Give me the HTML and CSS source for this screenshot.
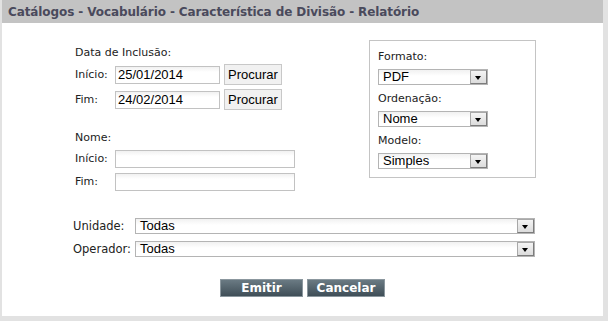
FILE: index.html
```html
<!DOCTYPE html>
<html lang="pt">
<head>
    <meta charset="UTF-8">
    <title>Característica de Divisão - Relatório</title>
    <link rel="stylesheet" href="styles.css">
</head>
<body>
    <div class="panel">
        <div class="panel-title">Catálogos - Vocabulário - Característica de Divisão - Relatório</div>
        <div class="panel-body">
            <div class="top">
                <div class="left">
                    <div class="group">
                        <div class="group-title">Data de Inclusão:</div>
                        <div class="row">
                            <label>Início:</label>
                            <input class="field date" type="text" value="25/01/2014">
                            <button class="btn-search">Procurar</button>
                        </div>
                        <div class="row">
                            <label>Fim:</label>
                            <input class="field date" type="text" value="24/02/2014">
                            <button class="btn-search">Procurar</button>
                        </div>
                    </div>
                    <div class="group names">
                        <div class="group-title">Nome:</div>
                        <div class="row">
                            <label>Início:</label>
                            <input class="field name" type="text">
                        </div>
                        <div class="row">
                            <label>Fim:</label>
                            <input class="field name" type="text">
                        </div>
                    </div>
                </div>

                <div class="options">
                    <div class="opt-label">Formato:</div>
                    <div class="combo small"><span class="combo-text">PDF</span><span class="combo-arrow"></span></div>
                    <div class="opt-label">Ordenação:</div>
                    <div class="combo small"><span class="combo-text">Nome</span><span class="combo-arrow"></span></div>
                    <div class="opt-label">Modelo:</div>
                    <div class="combo small"><span class="combo-text">Simples</span><span class="combo-arrow"></span></div>
                </div>
            </div>

            <div class="filters">
                <div class="filter-row">
                    <label>Unidade:</label>
                    <div class="combo wide"><span class="combo-text">Todas</span><span class="combo-arrow"></span></div>
                </div>
                <div class="filter-row">
                    <label>Operador:</label>
                    <div class="combo wide"><span class="combo-text">Todas</span><span class="combo-arrow"></span></div>
                </div>
            </div>

            <div class="actions">
                <button class="btn-action emitir">Emitir</button>
                <button class="btn-action cancelar">Cancelar</button>
            </div>
        </div>
    </div>
</body>
</html>
```

FILE: styles.css
```css
body {
    margin: 0;
    background-color: #e2e2e2;
    font-family: "DejaVu Sans", Verdana, sans-serif;
    font-size: 11px;
    color: #222;
}
.panel {
    margin-left: 2px;
    width: 601px;
    height: 316px;
    background-color: #fff;
}
.panel-title {
    height: 23px;
    line-height: 24px;
    padding-left: 6px;
    background-color: #c3c3c3;
    color: #4a4a5c;
    font-weight: bold;
    font-size: 12px;
    letter-spacing: -0.1px;
    white-space: nowrap;
}
.top {
    display: flex;
    margin-top: 17px;
}
.left {
    width: 294px;
    padding-left: 73px;
    padding-top: 6px;
}
.group-title {
    line-height: 14px;
}
.row {
    display: flex;
    align-items: center;
    height: 21px;
    margin-top: 4px;
}
.row label {
    width: 40px;
    line-height: 14px;
}
.field {
    box-sizing: border-box;
    height: 18px;
    margin: 0;
    padding: 0 2px;
    border: 1px solid #c2c2c2;
    background: linear-gradient(#f1f1f1, #fff 5px);
    font-family: "Liberation Sans", Arial, sans-serif;
    font-size: 13px;
    color: #000;
}
.date {
    width: 105px;
}
.name {
    width: 180px;
}
.btn-search {
    box-sizing: border-box;
    height: 21px;
    width: 58px;
    margin: 0 0 0 4px;
    padding: 0;
    border: 1px solid #c8c8c8;
    background-color: #f1f1f1;
    font-family: "Liberation Sans", Arial, sans-serif;
    font-size: 13px;
    color: #000;
}
.names {
    margin-top: 21px;
}
.names .row {
    height: 18px;
    margin-top: 5px;
}
.names .group-title {
    margin-bottom: 3px;
}

/* caixa de opcoes do relatorio */
.options {
    box-sizing: border-box;
    width: 167px;
    height: 138px;
    border: 1px solid #c4c4c4;
    padding: 9px 8px 0 8px;
}
.opt-label {
    line-height: 14px;
    margin-bottom: 5px;
}
.options .combo {
    margin-bottom: 7px;
}

.combo {
    box-sizing: border-box;
    display: flex;
    align-items: center;
    height: 16px;
    border: 1px solid #b4b4b4;
    background: linear-gradient(#f1f1f1, #fff 6px);
}
.combo.small {
    width: 110px;
}
.combo.wide {
    width: 400px;
}
.combo-text {
    flex: 1;
    padding-left: 4px;
    font-family: "Liberation Sans", Arial, sans-serif;
    font-size: 13px;
    line-height: 14px;
    color: #000;
}
.combo-arrow {
    box-sizing: border-box;
    position: relative;
    width: 17px;
    height: 14px;
    border: 1px solid #7c7c7c;
    border-top-color: #a8a8a8;
    border-left-color: #a8a8a8;
    background: linear-gradient(#f4f4f4, #dcdcdc);
}
.combo-arrow::after {
    content: "";
    position: absolute;
    left: 4px;
    top: 5px;
    border-left: 3.5px solid transparent;
    border-right: 3.5px solid transparent;
    border-top: 4px solid #000;
}

.filters {
    margin-top: 27px;
    padding-left: 71px;
}
.filter-row {
    display: flex;
    align-items: center;
    margin-bottom: 7px;
}
.filter-row label {
    width: 62px;
    font-size: 11.5px;
}

.actions {
    display: flex;
    justify-content: center;
    gap: 4px;
    margin-top: 22px;
}
.btn-action {
    box-sizing: border-box;
    height: 18px;
    margin: 0;
    padding: 0;
    border: 1px solid #8b979e;
    background: linear-gradient(#6a7a83, #3f4e57);
    color: #fff;
    font-family: "DejaVu Sans", Verdana, sans-serif;
    font-weight: bold;
    font-size: 12px;
    line-height: 15px;
}
.emitir {
    width: 83px;
}
.cancelar {
    width: 78px;
}
```
